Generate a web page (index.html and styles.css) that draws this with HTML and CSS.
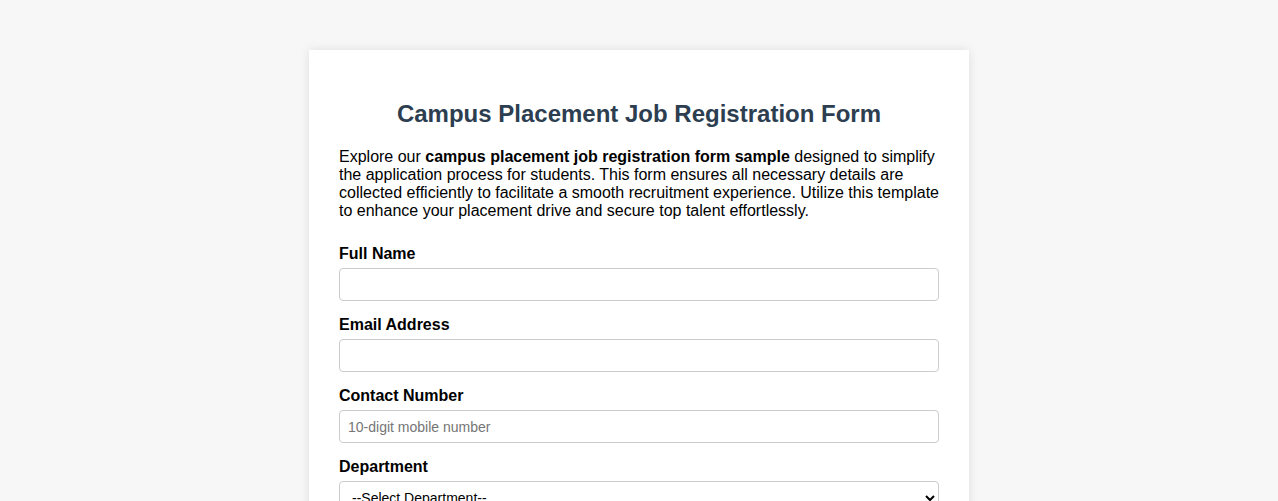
FILE: index.html
```html
<!DOCTYPE html>
<html lang="en">
<head>
<meta charset="utf-8">
<title>Campus Placement Job Registration Form</title>
<link rel="stylesheet" href="styles.css">
</head>
<body>
<div class="container">
  <h1 class="title">Campus Placement Job Registration Form</h1>
  <p class="intro">Explore our <strong>campus placement job registration form sample</strong> designed to simplify the application process for students. This form ensures all necessary details are collected efficiently to facilitate a smooth recruitment experience. Utilize this template to enhance your placement drive and secure top talent effortlessly.</p>
  <form class="form">
    <label class="label" for="name">Full Name</label>
    <input class="field" type="text" id="name">
    <label class="label" for="email">Email Address</label>
    <input class="field" type="email" id="email">
    <label class="label" for="phone">Contact Number</label>
    <input class="field" type="tel" id="phone" placeholder="10-digit mobile number">
    <label class="label" for="dept">Department</label>
    <select class="field select" id="dept">
      <option>--Select Department--</option>
      <option>Computer Science</option>
      <option>Electronics</option>
      <option>Mechanical</option>
    </select>
  </form>
</div>
</body>
</html>
```

FILE: styles.css
```css
html, body {
  margin: 0;
  padding: 0;
}
body {
  background: #f7f7f7;
  font-family: "Liberation Sans", Arial, sans-serif;
  color: #000;
}
.container {
  width: 600px;
  margin: 50px auto;
  padding: 30px;
  background: #fff;
  box-shadow: 0 0 10px rgba(0, 0, 0, 0.1);
}
.title {
  margin: 20px 0 20px;
  font-size: 24px;
  text-align: center;
  color: #2c3e50;
}
.intro {
  margin: 0 0 25px;
  font-size: 16px;
  line-height: 18px;
}
.form {
  display: flex;
  flex-direction: column;
}
.label {
  font-weight: bold;
  font-size: 16px;
  line-height: 18px;
  margin-bottom: 5px;
}
.field {
  box-sizing: border-box;
  width: 100%;
  height: 33px;
  padding: 8px;
  margin-bottom: 15px;
  border: 1px solid #ccc;
  border-radius: 4px;
  font-family: "Liberation Sans", Arial, sans-serif;
  font-size: 14px;
  background: #fff;
}
.field::placeholder {
  color: #757575;
}
.select {
  height: 34px;
  padding: 6px 8px;
  color: #000;
}
```
